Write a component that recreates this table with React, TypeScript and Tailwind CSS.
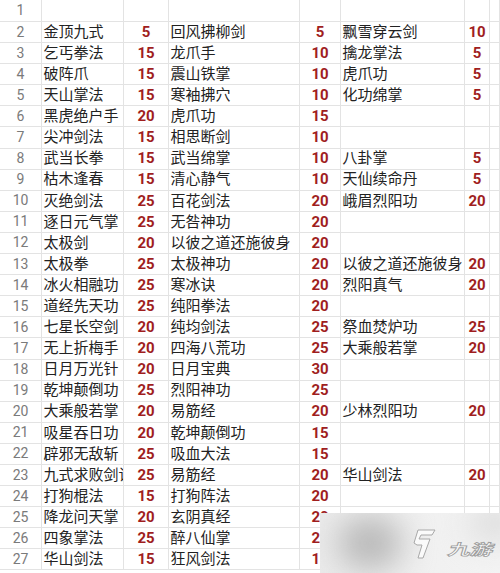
import React from "react";

type Row = [string, string, string, string, string, string];

const rows: Row[] = [
  ["", "", "", "", "", ""],
  ["金顶九式", "5", "回风拂柳剑", "5", "飘雪穿云剑", "10"],
  ["乞丐拳法", "15", "龙爪手", "10", "擒龙掌法", "5"],
  ["破阵爪", "15", "震山铁掌", "10", "虎爪功", "5"],
  ["天山掌法", "15", "寒袖拂穴", "10", "化功绵掌", "5"],
  ["黑虎绝户手", "20", "虎爪功", "15", "", ""],
  ["尖冲剑法", "15", "相思断剑", "10", "", ""],
  ["武当长拳", "15", "武当绵掌", "10", "八卦掌", "5"],
  ["枯木逢春", "15", "清心静气", "10", "天仙续命丹", "5"],
  ["灭绝剑法", "25", "百花剑法", "20", "峨眉烈阳功", "20"],
  ["逐日元气掌", "25", "无咎神功", "20", "", ""],
  ["太极剑", "20", "以彼之道还施彼身", "20", "", ""],
  ["太极拳", "25", "太极神功", "20", "以彼之道还施彼身", "20"],
  ["冰火相融功", "25", "寒冰诀", "20", "烈阳真气", "20"],
  ["道经先天功", "25", "纯阳拳法", "20", "", ""],
  ["七星长空剑", "20", "纯均剑法", "25", "祭血焚炉功", "25"],
  ["无上折梅手", "20", "四海八荒功", "25", "大乘般若掌", "20"],
  ["日月万光针", "20", "日月宝典", "30", "", ""],
  ["乾坤颠倒功", "25", "烈阳神功", "25", "", ""],
  ["大乘般若掌", "20", "易筋经", "20", "少林烈阳功", "20"],
  ["吸星吞日功", "20", "乾坤颠倒功", "15", "", ""],
  ["辟邪无敌斩", "25", "吸血大法", "15", "", ""],
  ["九式求败剑诀", "25", "易筋经", "20", "华山剑法", "20"],
  ["打狗棍法", "15", "打狗阵法", "20", "", ""],
  ["降龙问天掌", "20", "玄阴真经", "20", "", ""],
  ["四象掌法", "25", "醉八仙掌", "25", "", ""],
  ["华山剑法", "15", "狂风剑法", "15", "", ""],
];

const cell =
  "border-r border-b border-[#e3e3e3] flex items-center overflow-hidden whitespace-nowrap";
const textCell = `${cell} pl-[1.5px] text-[15px] text-[#222]`;
const numCell = `${cell} justify-center text-[15px] font-bold text-[#9f1e1e]`;

export default function App() {
  return (
    <div className="relative w-[500px] h-[573px] overflow-hidden bg-white font-['Roboto','Noto_Sans_CJK_SC',sans-serif]">
      <div className="grid grid-cols-[42px_82px_45px_131px_41px_124px_25px_10px] grid-rows-[22px_repeat(26,21.1px)]">
        {rows.map((r, i) => (
          <React.Fragment key={i}>
            <div className={`${cell} justify-center text-[14px] text-[#7a7a7a]`}>{i + 1}</div>
            <div className={textCell}>{r[0]}</div>
            <div className={numCell}>{r[1]}</div>
            <div className={textCell}>{r[2]}</div>
            <div className={numCell}>{r[3]}</div>
            <div className={textCell}>{r[4]}</div>
            <div className={numCell}>{r[5]}</div>
            <div className={cell}></div>
          </React.Fragment>
        ))}
      </div>

      {/* watermark overlay */}
      <div className="absolute left-[320px] top-[513px] right-0 bottom-0 overflow-hidden bg-gradient-to-r from-[#ebebeb] to-[#f4f4f4]">
        <div className="absolute left-[18px] top-[4px] w-[64px] h-[52px] rounded-full bg-[#b8b8b8] blur-lg" />
        <div className="absolute left-[150px] top-[-10px] w-[50px] h-[40px] rounded-full bg-[#dcdcdc] blur-lg" />
        <div className="relative flex items-center h-full pl-[91px] pt-[2px] gap-[12px]">
          <svg width="26" height="30" viewBox="0 0 26 30" className="shrink-0">
            <path
              d="M7 1 L24 1 L21 6 L10 6 L8 10 L19 10 L12 29 L7 29 L11 16 L6 16 L3 14 Z"
              fill="#fafafa"
              stroke="#a8a8a8"
              strokeWidth="1"
              strokeLinejoin="round"
            />
          </svg>
          <div className="mt-[8px] text-[15px] leading-none font-bold text-[#fafafa] [-webkit-text-stroke:0.8px_#9e9e9e] origin-left scale-x-[1.5] -skew-x-12 font-['Noto_Sans_CJK_SC',sans-serif]">
            九游
          </div>
        </div>
      </div>
    </div>
  );
}
